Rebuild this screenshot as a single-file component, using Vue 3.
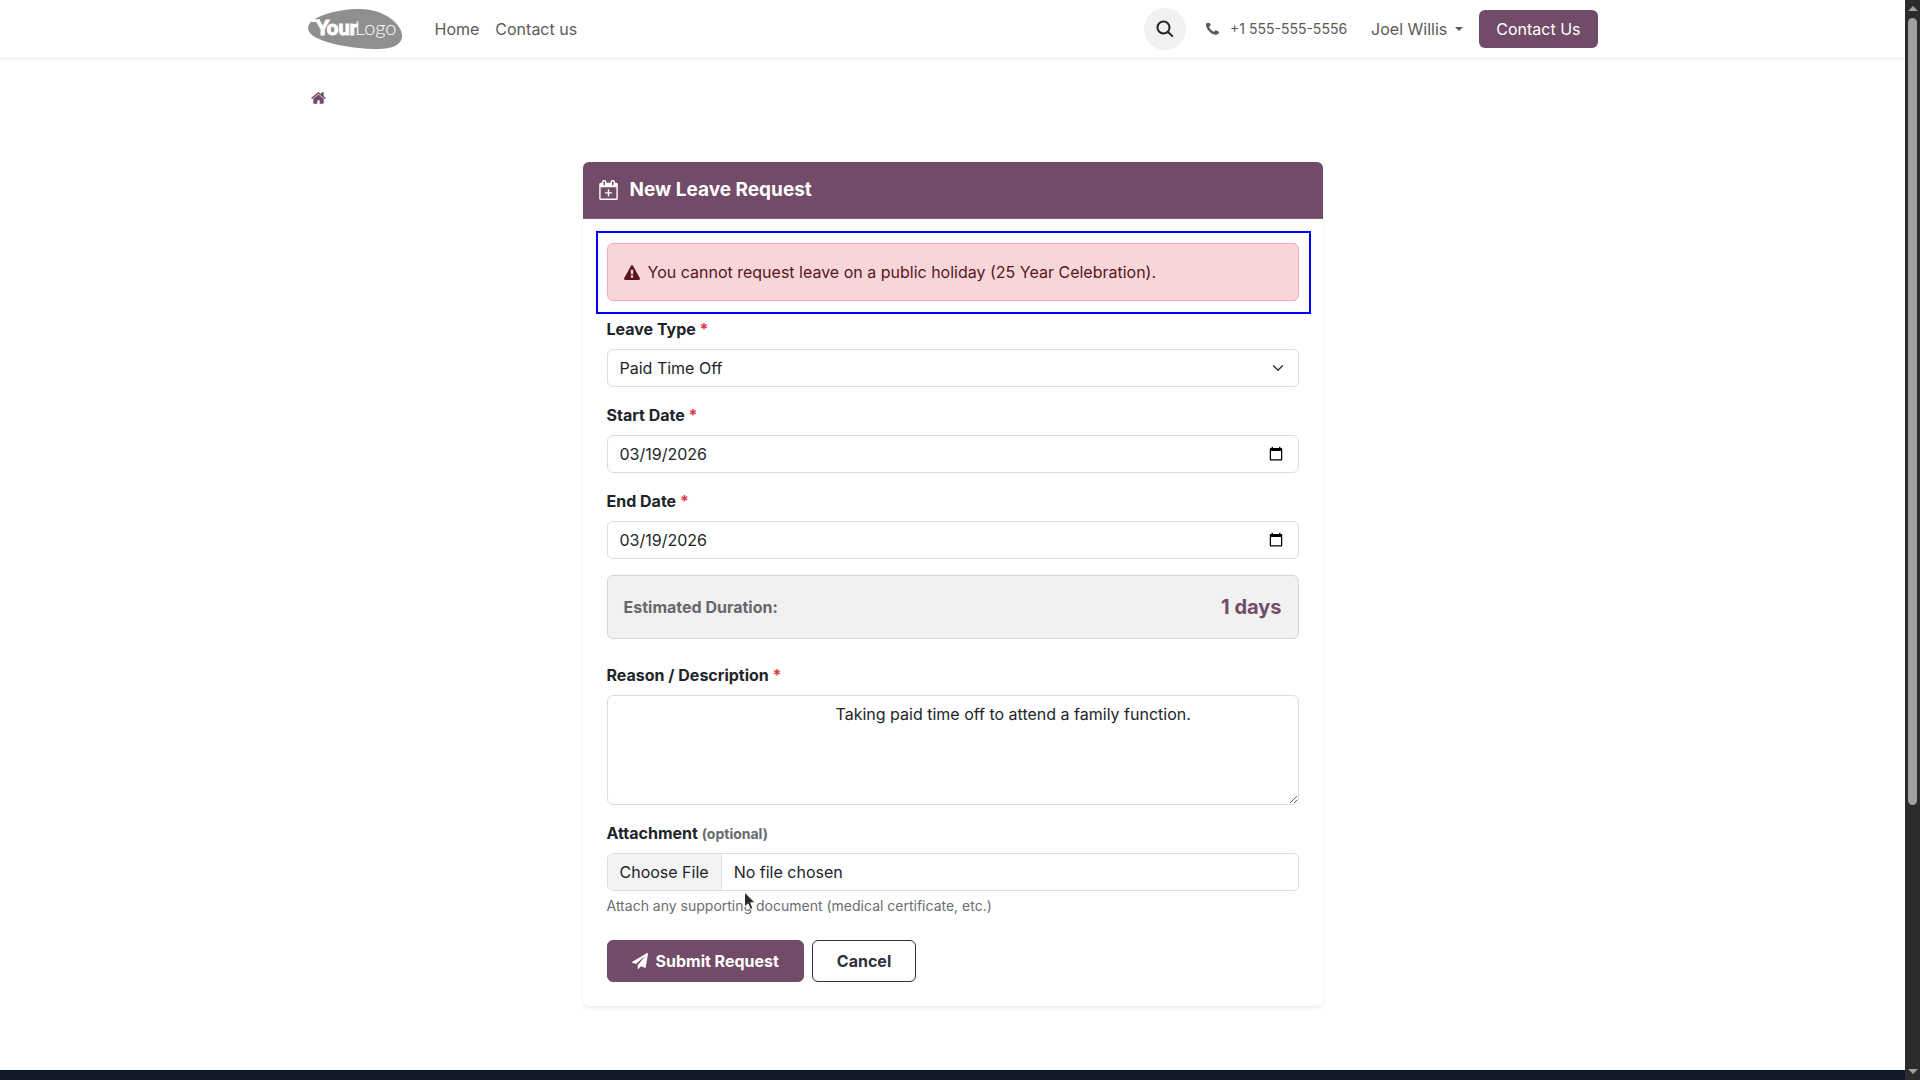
<script setup>
import { ref } from 'vue'

const leaveType = ref('Paid Time Off')
const startDate = ref('2026-03-19')
const endDate = ref('2026-03-19')
const reason = ref(' '.repeat(48) + 'Taking paid time off to attend a family function.')
</script>

<template>
  <div class="shell">
    <div class="page">
      <header class="site-header">
        <div class="container header-row">
          <a href="#" class="logo" aria-label="Your Logo">
            <svg viewBox="0 0 94 40" width="94" height="40">
              <path d="M0 19C0 8 28 0 52 0C76 0 94 15 94 27C94 36 84 40 70 40C44 40 0 33 0 19Z" fill="#8f8f8f" />
              <path d="M4 10.500H12V13H4Z" fill="#fff" />
              <text x="8" y="26" class="logo-bold">Your</text>
              <text x="47" y="26" class="logo-light">Logo</text>
            </svg>
          </a>
          <nav class="menu">
            <a href="#">Home</a>
            <a href="#">Contact us</a>
          </nav>
          <div class="tools">
            <button type="button" class="search" aria-label="Search">
              <svg viewBox="0 0 18 18" width="18" height="18" fill="none" stroke="#212529" stroke-width="2">
                <circle cx="7.500" cy="7.500" r="6" />
                <path d="M11.800 11.800L16.800 16.600" />
              </svg>
            </button>
            <a href="#" class="phone">
              <svg viewBox="192 256 1408 1408" width="13" height="13" fill="currentColor"><path d="M1600 1240q0 27-10 70.5t-21 68.500q-21 50-122 106-94 51-186 51-27 0-53-3.500t-57-12.500-47-14.500-55.500-20.500-49.500-18q-98-35-175-83-127-79-264-216t-216-264q-48-77-83-175-3-9-18-49.500t-20.500-55.500-14.500-47-12.500-57-3.500-53q0-92 51-186 56-101 106-122 25-11 68.500-21t70.500-10q14 0 21 3 18 6 53 76 11 19 30 54t35 63.500 31 53.500q3 4 17.500 25t21.500 35.500 7 28.500q0 20-28.500 50t-62 55-62 53-28.500 46q0 9 5 22.500t8.500 20.500 14 24 11.500 19q76 137 174 235t235 174q2 1 19 11.500t24 14 20.500 8.500 22.500 5q18 0 46-28.500t53-62 55-62 50-28.500q14 0 28.500 7t35.500 21.500 25 17.500q25 15 53.500 31t63.500 35 54 30q70 35 76 53 3 7 3 21z" /></svg>
              <span>+1 555-555-5556</span>
            </a>
            <button type="button" class="user">Joel Willis<span class="caret"></span></button>
            <a href="#" class="contact-btn">Contact Us</a>
          </div>
        </div>
      </header>

      <main>
        <nav class="container crumbs" aria-label="Breadcrumb">
          <a href="#" aria-label="Home">
            <svg viewBox="64 256 1664 1280" width="15" height="12" fill="currentColor"><path d="M1472 992v480q0 26-19 45t-45 19h-384v-384h-256v384h-384q-26 0-45-19t-19-45v-480q0-1 .5-3t.5-3l575-474 575 474q1 2 1 6zm223-69l-62 74q-8 9-21 11h-3q-13 0-21-7l-692-577-692 577q-12 8-24 7-13-2-21-11l-62-74q-8-10-7-23.500t11-21.500l719-599q32-26 76-26t76 26l244 204v-195q0-14 9-23t23-9h192q14 0 23 9t9 23v408l219 182q10 8 11 21.500t-7 23.500z" /></svg>
          </a>
        </nav>

        <section class="card">
          <div class="card-head">
            <svg viewBox="128 0 1664 1792" width="19" height="20" fill="currentColor"><path d="M1664 256q52 0 90 38t38 90v1280q0 52-38 90t-90 38h-1408q-52 0-90-38t-38-90v-1280q0-52 38-90t90-38h128v-96q0-66 47-113t113-47h64q66 0 113 47t47 113v96h384v-96q0-66 47-113t113-47h64q66 0 113 47t47 113v96h128zm-384-96v288q0 14 9 23t23 9h64q14 0 23-9t9-23v-288q0-14-9-23t-23-9h-64q-14 0-23 9t-9 23zm-768 0v288q0 14 9 23t23 9h64q14 0 23-9t9-23v-288q0-14-9-23t-23-9h-64q-14 0-23 9t-9 23zm1152 1504v-1024h-1408v1024h1408zm-640-576h224q14 0 23 9t9 23v64q0 14-9 23t-23 9h-224v224q0 14-9 23t-23 9h-64q-14 0-23-9t-9-23v-224h-224q-14 0-23-9t-9-23v-64q0-14 9-23t23-9h224v-224q0-14 9-23t23-9h64q14 0 23 9t9 23v224z" /></svg>
            <h1>New Leave Request</h1>
          </div>

          <form class="card-body" @submit.prevent>
            <div class="alert" role="alert">
              <svg viewBox="0 0 1792 1664" width="16" height="15" fill="currentColor"><path d="M1024 1375v-190q0-14-9.500-23.500t-22.500-9.500h-192q-13 0-22.500 9.500t-9.500 23.500v190q0 14 9.500 23.500t22.500 9.500h192q13 0 22.500-9.500t9.500-23.500zm-2-374l18-459q0-12-10-19-13-11-24-11h-220q-11 0-24 11-10 7-10 21l17 457q0 10 10 16.500t24 6.500h185q14 0 23.500-6.500t10.500-16.500zm-14-934l768 1408q35 63-2 126-17 29-46.500 46t-63.500 17h-1536q-34 0-63.500-17t-46.500-46q-37-63-2-126l768-1408q17-31 47-49t65-18 65 18 47 49z" /></svg>
              <span>You cannot request leave on a public holiday (25 Year Celebration).</span>
            </div>

            <div class="field">
              <label for="leave-type">Leave Type <span class="req">*</span></label>
              <select id="leave-type" v-model="leaveType" class="control select">
                <option>Paid Time Off</option>
              </select>
            </div>

            <div class="field">
              <label for="start-date">Start Date <span class="req">*</span></label>
              <input id="start-date" v-model="startDate" type="date" class="control date">
            </div>

            <div class="field">
              <label for="end-date">End Date <span class="req">*</span></label>
              <input id="end-date" v-model="endDate" type="date" class="control date">
            </div>

            <div class="duration">
              <span>Estimated Duration:</span>
              <strong>1 days</strong>
            </div>

            <div class="field">
              <label for="reason">Reason / Description <span class="req">*</span></label>
              <textarea id="reason" v-model="reason" rows="4" class="control"></textarea>
            </div>

            <div class="field attachment">
              <label for="attachment">Attachment <small>(optional)</small></label>
              <input id="attachment" type="file" class="control file">
              <p class="help">Attach any supporting document (medical certificate, etc.)</p>
              <svg class="pointer" viewBox="0 0 14 20" width="14" height="20">
                <path d="M1.500 1V16L5 12.800L7.500 18.500L10 17.400L7.600 11.800H12.300Z" fill="#2b2b2b" stroke="#fff" stroke-width="1" stroke-linejoin="round" />
              </svg>
            </div>

            <div class="actions">
              <button type="submit" class="btn primary">
                <svg viewBox="0 0 1792 1792" width="16" height="16" fill="currentColor"><path d="M1764 11q33 24 27 64l-256 1536q-5 29-32 45-14 8-31 8-11 0-24-5l-453-185-242 295q-18 23-49 23-13 0-22-4-19-7-30.500-23.500t-11.500-36.500v-349l864-1059-1069 925-395-162q-37-14-40-55-2-40 32-59l1664-960q15-9 32-9 20 0 36 11z" /></svg>
                <span>Submit Request</span>
              </button>
              <button type="button" class="btn outline">Cancel</button>
            </div>
          </form>
        </section>
      </main>

      <footer class="site-footer"></footer>
    </div>

    <div class="scrollbar" aria-hidden="true">
      <span class="arrow up"></span>
      <span class="track"><span class="thumb"></span></span>
      <span class="arrow down"></span>
    </div>
  </div>
</template>

<style>
body {
  margin: 0;
  background: #fff;
}
</style>

<style scoped>
.shell {
  display: grid;
  grid-template-columns: minmax(0, 1fr) 15px;
  min-height: 100vh;
  font-family: Inter, "Noto Sans", sans-serif;
  font-size: 16px;
  line-height: 24px;
  color: #212529;
}
.shell *,
.shell *::before,
.shell *::after {
  box-sizing: border-box;
}
.page {
  display: flex;
  flex-direction: column;
}
a {
  color: inherit;
  text-decoration: none;
}
button {
  font: inherit;
  cursor: pointer;
}
svg {
  display: block;
  flex: none;
}
.container {
  width: 100%;
  max-width: 1320px;
  margin: 0 auto;
  padding: 0 15px;
}

.site-header {
  border-bottom: 1px solid #ececec;
  box-shadow: 0 1px 2px rgba(0, 0, 0, 0.04);
}
.header-row {
  display: flex;
  align-items: center;
  height: 58px;
  color: #5a5a5a;
}
.logo-bold,
.logo-light {
  fill: #fff;
  font-family: Lato, sans-serif;
  font-size: 20px;
}
.logo-bold {
  font-weight: 900;
  stroke: #fff;
  stroke-width: 1px;
}
.logo-light {
  font-weight: 300;
}
.menu {
  display: flex;
  gap: 16px;
  margin-left: 33px;
}
.tools {
  display: flex;
  align-items: center;
  margin-left: auto;
}
.search {
  display: grid;
  place-items: center;
  width: 42px;
  height: 42px;
  padding: 0;
  border: 0;
  border-radius: 50%;
  background: #f1f1f1;
}
.phone {
  display: flex;
  align-items: center;
  gap: 11px;
  margin-left: 20px;
  font-size: 14px;
}
.user {
  display: flex;
  align-items: center;
  gap: 8px;
  margin-left: 24px;
  padding: 0;
  border: 0;
  background: none;
  color: inherit;
}
.caret {
  border: 4px solid transparent;
  border-top-color: currentColor;
  border-bottom: 0;
}
.contact-btn {
  margin-left: 16px;
  padding: 7px 17px;
  border-radius: 6px;
  background: #714b67;
  color: #fff;
}

.crumbs {
  padding-top: 27px;
}
.crumbs a {
  display: flex;
  align-items: center;
  width: 24px;
  height: 24px;
  padding-left: 3px;
  color: #714b67;
}

.card {
  width: 100%;
  max-width: 740px;
  margin: 52px auto 64px;
  border-radius: 6px;
  background: #fff;
  box-shadow: 0 2px 4px rgba(0, 0, 0, 0.08);
}
.card-head {
  display: flex;
  align-items: center;
  gap: 12px;
  padding: 16px;
  border-bottom: 1px solid #856379;
  border-radius: 6px 6px 0 0;
  background: #714b67;
  color: #fff;
}
h1 {
  margin: 0;
  font-size: 19px;
  font-weight: 700;
  line-height: 24px;
}
.card-body {
  padding: 24px;
}
.alert {
  position: relative;
  display: flex;
  align-items: center;
  gap: 8px;
  margin-bottom: 16px;
  padding: 16px;
  border: 1px solid #f1aeb5;
  border-radius: 6px;
  background: #f7d6d9;
  color: #58151c;
}
.alert::after {
  content: "";
  position: absolute;
  inset: -13px -13px -14px -12px;
  border: 2px solid #0000ff;
  pointer-events: none;
}
.field {
  display: flex;
  flex-direction: column;
  margin-bottom: 16px;
}
label {
  margin-bottom: 8px;
  font-weight: 700;
}
label small {
  font-size: 14px;
  line-height: 1;
  color: #676a6d;
}
.req {
  color: #dc3545;
}
.control {
  display: block;
  width: 100%;
  height: 38px;
  margin: 0;
  padding: 6px 12px;
  border: 1px solid #dcdddd;
  border-radius: 6px;
  background-color: #fff;
  color: #212529;
  font: inherit;
}
.select {
  appearance: none;
  background-image: url("data:image/svg+xml,%3csvg xmlns='http://www.w3.org/2000/svg' viewBox='0 0 16 16'%3e%3cpath fill='none' stroke='%23343a40' stroke-linecap='round' stroke-linejoin='round' stroke-width='2' d='m2 5 6 6 6-6'/%3e%3c/svg%3e");
  background-repeat: no-repeat;
  background-position: right 12px center;
  background-size: 16px 12px;
}
.date::-webkit-datetime-edit-fields-wrapper,
.date::-webkit-datetime-edit-text,
.date::-webkit-datetime-edit-month-field,
.date::-webkit-datetime-edit-day-field,
.date::-webkit-datetime-edit-year-field {
  padding: 0;
}
textarea.control {
  height: auto;
  resize: vertical;
}
.file {
  overflow: hidden;
}
.file::file-selector-button {
  margin: -6px 12px -6px -12px;
  padding: 6px 12px;
  border: 0 solid #dcdddd;
  border-right-width: 1px;
  border-radius: 0;
  background: #f4f4f4;
  color: #212529;
  font: inherit;
}
.duration {
  display: flex;
  align-items: center;
  justify-content: space-between;
  margin-bottom: 24px;
  padding: 16px;
  border: 1px solid #d3d4d5;
  border-radius: 6px;
  background: #f1f1f1;
  font-weight: 700;
  color: #65686b;
}
.duration strong {
  font-size: 20px;
  font-weight: 700;
  line-height: 30px;
  color: #714b67;
}
.attachment {
  position: relative;
  margin-bottom: 24px;
}
.help {
  margin: 4px 0 0;
  font-size: 14px;
  line-height: 21px;
  color: #6b6e71;
}
.pointer {
  position: absolute;
  left: 136px;
  top: 70px;
  pointer-events: none;
}
.actions {
  display: flex;
  gap: 8px;
}
.btn {
  display: flex;
  align-items: center;
  gap: 8px;
  padding: 8px 24px;
  border: 1px solid #714b67;
  border-radius: 6px;
  font-weight: 700;
}
.primary {
  background: #714b67;
  color: #fff;
}
.outline {
  border-color: #2b2f42;
  background: #fff;
  color: #2b2f3e;
}
.site-footer {
  flex: 1;
  min-height: 10px;
  background: #111827;
}

.scrollbar {
  position: sticky;
  top: 0;
  display: flex;
  flex-direction: column;
  align-items: center;
  height: 100vh;
  padding: 6px 0;
  background: #2c2c2c;
}
.track {
  flex: 1;
  width: 9px;
  margin: 7px 0;
}
.thumb {
  display: block;
  height: 75.4%;
  border-radius: 5px;
  background: #a0a0a0;
}
.arrow {
  border: 5px solid transparent;
}
.up {
  border-top: 0;
  border-bottom-color: #a0a0a0;
}
.down {
  border-bottom: 0;
  border-top-color: #a0a0a0;
}
</style>
